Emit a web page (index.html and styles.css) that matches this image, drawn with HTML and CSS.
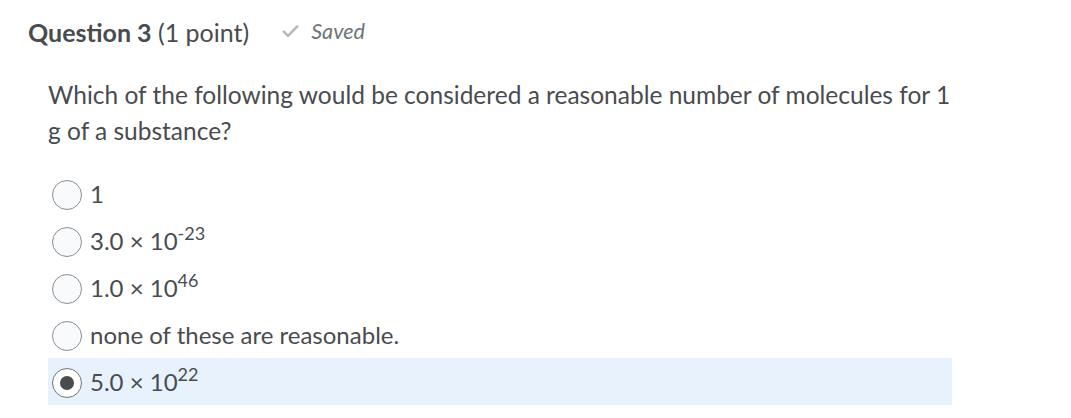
FILE: index.html
```html
<!DOCTYPE html>
<html lang="en">
<head>
<meta charset="utf-8">
<link rel="stylesheet" href="styles.css">
</head>
<body>
<div class="page">
  <div class="header">
    <h2 class="title"><strong>Question 3</strong> <span class="points">(1 point)</span></h2>
    <span class="saved">
      <svg class="check" width="17" height="14" viewBox="0 0 17 14"><path d="M1.8 7.6 L6 11.8 L15.2 2.4" fill="none" stroke="#b5b9bc" stroke-width="2.6" stroke-linecap="round" stroke-linejoin="round"/></svg>
      <em>Saved</em>
    </span>
  </div>
  <div class="question">
    <p class="prompt">Which of the following would be considered a reasonable number of molecules for 1 g of a substance?</p>
    <ul class="options">
      <li class="option"><span class="radio"></span><span class="label">1</span></li>
      <li class="option"><span class="radio"></span><span class="label">3.0 &times; 10<sup>-23</sup></span></li>
      <li class="option"><span class="radio"></span><span class="label">1.0 &times; 10<sup>46</sup></span></li>
      <li class="option"><span class="radio"></span><span class="label">none of these are reasonable.</span></li>
      <li class="option selected"><span class="radio checked"></span><span class="label">5.0 &times; 10<sup>22</sup></span></li>
    </ul>
  </div>
</div>
</body>
</html>
```
FILE: styles.css
```css
* { box-sizing: border-box; }
html, body { margin: 0; padding: 0; background: #fff; }
body {
  font-family: Lato, "Open Sans", "Liberation Sans", sans-serif;
  color: #494c4e;
}
.page { padding: 14px 0 0 28px; }
.header {
  display: flex;
  align-items: center;
  gap: 33px;
  height: 36px;
}
.title {
  margin: 0;
  font-size: 25px;
  font-weight: 400;
  line-height: 36px;
}
.title strong { font-weight: 700; }
.saved {
  display: flex;
  align-items: center;
  gap: 12px;
  color: #6e7376;
  font-size: 21.6px;
  margin-top: -2px;
}
.saved em { font-style: italic; }
.check { display: block; }
.question { padding: 27px 0 0 20px; width: 924px; }
.prompt {
  margin: 0;
  font-size: 24.5px;
  line-height: 36px;
}
.options {
  list-style: none;
  margin: 21px 0 0 0;
  padding: 0;
}
.option {
  display: flex;
  align-items: center;
  gap: 8px;
  height: 47px;
  padding-left: 4px;
  font-size: 24px;
}
.option.selected { background: #e8f2fc; }
.radio {
  flex: none;
  width: 30px;
  height: 30px;
  border-radius: 50%;
  border: 1px solid #8a8d90;
  background: #f9fafc;
  position: relative;
  top: 1px;
}
.radio.checked { border-color: #6e7376; background: #fff; }
.radio.checked::after {
  content: "";
  position: absolute;
  left: 7px; top: 7px;
  width: 14px; height: 14px;
  border-radius: 50%;
  background: #494c4e;
}
.label { line-height: 28px; }
sup { font-size: 18px; line-height: 0; vertical-align: 0; position: relative; top: -10px; }
```
